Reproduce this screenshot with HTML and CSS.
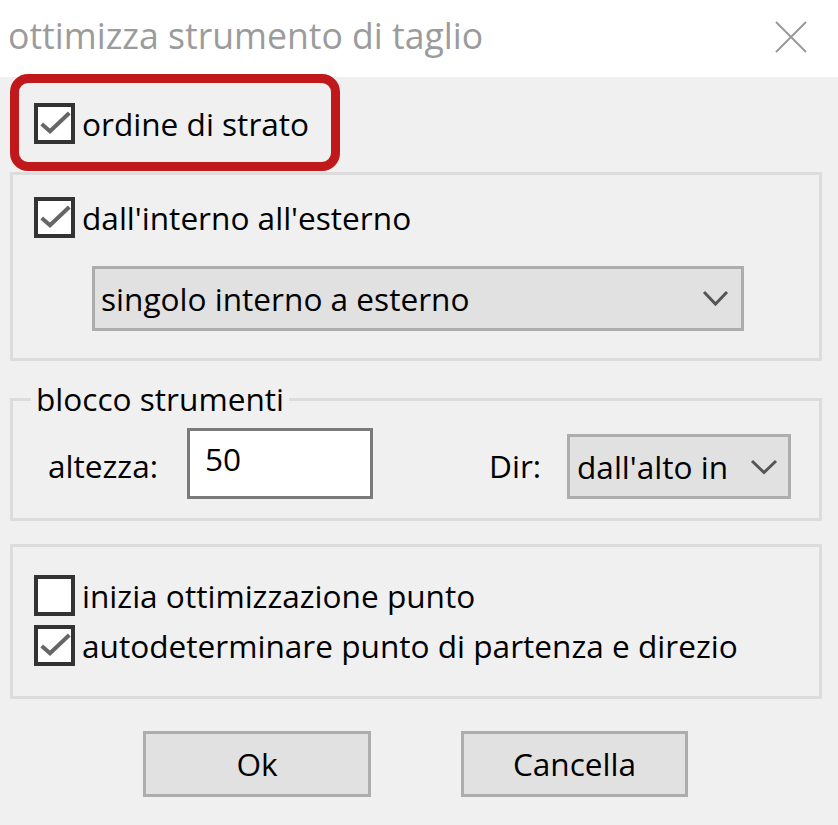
FILE: index.html
```html
<!DOCTYPE html>
<html lang="it">
<head>
<meta charset="utf-8">
<title>ottimizza strumento di taglio</title>
<link rel="stylesheet" href="styles.css">
</head>
<body>
<div class="dialog">
  <div class="titlebar">
    <span class="title">ottimizza strumento di taglio</span>
    <svg class="close" width="32" height="32" viewBox="0 0 32 32"><path d="M1 1 L31 31 M31 1 L1 31" stroke="#9a9a9a" stroke-width="2" fill="none"/></svg>
  </div>
  <div class="content">
    <div class="annot"></div>
    <div class="check row1">
      <span class="cbox"><svg width="33" height="33" viewBox="0 0 33 33"><polyline points="3.7,17 12,24.3 31.3,6" fill="none" stroke="#666" stroke-width="4"/></svg></span>
      <span class="lbl">ordine di strato</span>
    </div>

    <div class="group g1">
      <div class="check">
        <span class="cbox"><svg width="33" height="33" viewBox="0 0 33 33"><polyline points="3.7,17 12,24.3 31.3,6" fill="none" stroke="#666" stroke-width="4"/></svg></span>
        <span class="lbl">dall'interno all'esterno</span>
      </div>
      <div class="combo wide">
        <span>singolo interno a esterno</span>
        <svg width="27" height="17" viewBox="0 0 27 17"><polyline points="2,2 13.5,14 25,2" fill="none" stroke="#555" stroke-width="3"/></svg>
      </div>
    </div>

    <fieldset class="group g2">
      <legend>blocco strumenti</legend>
      <div class="toolrow">
        <span class="lbl-alt">altezza:</span>
        <div class="textbox">50</div>
        <span class="lbl-dir">Dir:</span>
        <div class="combo small">
          <span>dall'alto in</span>
          <svg width="28" height="16" viewBox="0 0 28 16"><polyline points="2,2 14,13.5 26,2" fill="none" stroke="#555" stroke-width="3"/></svg>
        </div>
      </div>
    </fieldset>

    <div class="group g3">
      <div class="check">
        <span class="cbox"></span>
        <span class="lbl">inizia ottimizzazione punto</span>
      </div>
      <div class="check">
        <span class="cbox"><svg width="33" height="33" viewBox="0 0 33 33"><polyline points="3.7,17 12,24.3 31.3,6" fill="none" stroke="#666" stroke-width="4"/></svg></span>
        <span class="lbl">autodeterminare punto di partenza e direzio</span>
      </div>
    </div>

    <div class="buttons">
      <button class="btn ok">Ok</button>
      <button class="btn cancel">Cancella</button>
    </div>
  </div>
</div>
</body>
</html>
```

FILE: styles.css
```css
* { box-sizing: border-box; }

html, body {
  margin: 0;
  padding: 0;
  background: #f0f0f0;
}

body {
  font-family: "Open Sans", "Noto Sans", sans-serif;
  font-size: 31.6px;
  color: #000;
  width: 838px;
  height: 825px;
  overflow: hidden;
}

.titlebar {
  height: 77px;
  background: #fff;
  display: flex;
  align-items: flex-start;
  padding-left: 8px;
}

.title {
  font-size: 35.6px;
  line-height: 71px;
  color: #9b9b9b;
  white-space: nowrap;
}

.close {
  margin-left: auto;
  margin-right: 31px;
  margin-top: 21px;
  flex: none;
}

.content {
  position: relative;
  padding: 26px 16px 0 10px;
}

.annot {
  position: absolute;
  left: 10px;
  top: -3px;
  width: 330px;
  height: 97px;
  border: 9px solid #c1181b;
  border-radius: 18px;
  pointer-events: none;
}

.check {
  display: flex;
  align-items: center;
  gap: 7px;
  line-height: 41px;
  white-space: nowrap;
}

.row1 {
  padding-left: 24px;
}

.cbox {
  width: 41px;
  height: 41px;
  flex: none;
  border: 4px solid #333;
  background: #fff;
  display: block;
}

.cbox svg { display: block; }

.group {
  border: 3px solid #dcdcdc;
}

.g1 {
  margin-top: 28px;
  padding: 22px 0 27px 21px;
}

.combo {
  border: 3px solid #adadad;
  background: #e1e1e1;
  display: flex;
  align-items: center;
  justify-content: space-between;
  line-height: 59px;
  white-space: nowrap;
}

.combo svg { flex: none; display: block; }

.combo.wide {
  margin-top: 28px;
  margin-left: 58px;
  width: 652px;
  height: 65px;
  padding: 0 12px 0 6px;
}

.g2 {
  margin: 23px 0 0;
  padding: 0 28px 19px 18px;
  min-width: 0;
}

.g2 legend {
  padding: 0 5px;
  line-height: 30px;
}

.toolrow {
  display: flex;
  align-items: flex-start;
  margin-top: 14px;
  padding-left: 17px;
}

.lbl-alt {
  width: 139px;
  flex: none;
  margin-top: 17px;
  line-height: 42px;
}

.textbox {
  width: 186px;
  height: 71px;
  flex: none;
  border: 3px solid #7a7a7a;
  background: #fff;
  padding: 0 15px 9px;
  line-height: 56px;
}

.lbl-dir {
  margin-left: auto;
  width: 78px;
  flex: none;
  margin-top: 17px;
  line-height: 42px;
}

.combo.small {
  width: 224px;
  height: 65px;
  flex: none;
  margin-top: 6px;
  padding: 0 10px 0 7px;
  line-height: 60px;
}

.g3 {
  margin-top: 23px;
  padding: 28px 0 30px 21px;
  display: flex;
  flex-direction: column;
  gap: 9px;
}

.buttons {
  display: flex;
  gap: 90px;
  margin-top: 32px;
  padding-left: 133px;
}

.btn {
  font: inherit;
  color: #000;
  height: 66px;
  border: 3px solid #adadad;
  background: #e1e1e1;
  line-height: 60px;
  padding: 0;
  text-align: center;
  border-radius: 0;
}

.btn.ok { width: 228px; }
.btn.cancel { width: 227px; }
```
